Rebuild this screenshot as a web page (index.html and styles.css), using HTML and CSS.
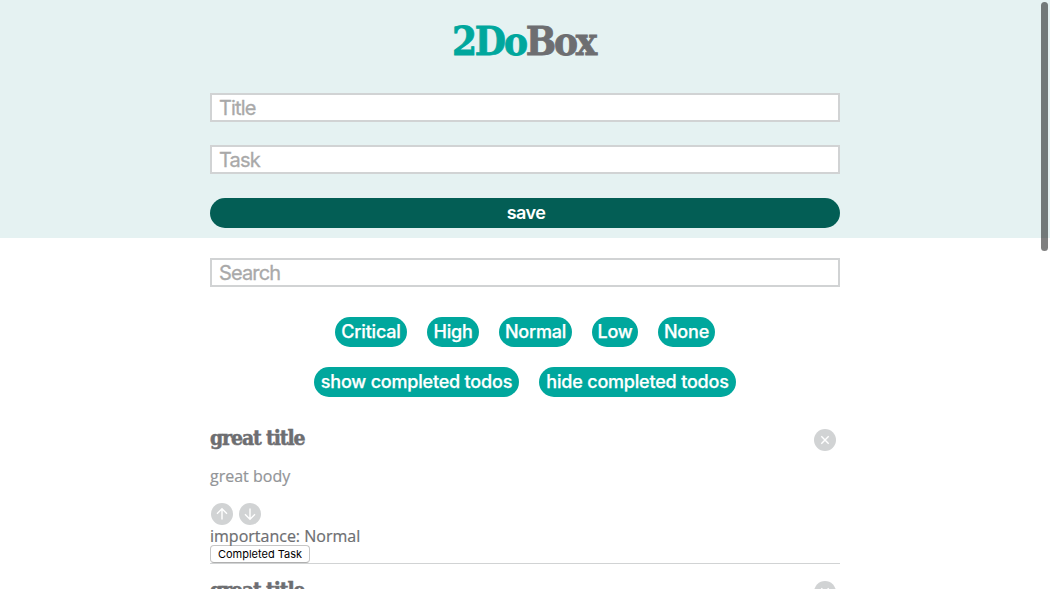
FILE: index.html
```html
<!DOCTYPE html>
<html lang="en">
<head>
<meta charset="utf-8">
<title>2DoBox</title>
<link rel="stylesheet" href="styles.css">
</head>
<body>
<header class="top">
  <h1 class="logo"><span class="logo-accent">2Do</span>Box</h1>
  <form class="entry">
    <input class="field" type="text" placeholder="Title">
    <input class="field" type="text" placeholder="Task">
    <button class="save" type="button">save</button>
  </form>
</header>
<main class="content">
  <input class="field" type="text" placeholder="Search">
  <div class="filters">
    <button class="pill critical">Critical</button>
    <button class="pill high">High</button>
    <button class="pill normal">Normal</button>
    <button class="pill low">Low</button>
    <button class="pill none">None</button>
  </div>
  <div class="filters second">
    <button class="pill show">show completed todos</button>
    <button class="pill hide">hide completed todos</button>
  </div>
  <article class="todo">
    <div class="todo-head">
      <h2 class="todo-title">great title</h2>
      <svg class="icon" viewBox="0 0 22 22"><circle cx="11" cy="11" r="11"/><path d="M7.3 7.3l7.4 7.4M14.7 7.3l-7.4 7.4"/></svg>
    </div>
    <p class="todo-body">great body</p>
    <div class="votes">
      <svg class="icon" viewBox="0 0 22 22"><circle cx="11" cy="11" r="11"/><path d="M11 16.5V5.8M6 10.8l5-5 5 5"/></svg>
      <svg class="icon" viewBox="0 0 22 22"><circle cx="11" cy="11" r="11"/><path d="M11 5.5v10.7M6 11.2l5 5 5-5"/></svg>
    </div>
    <p class="importance">importance: Normal</p>
    <button class="complete">Completed Task</button>
  </article>
  <article class="todo">
    <div class="todo-head">
      <h2 class="todo-title">great title</h2>
      <svg class="icon" viewBox="0 0 22 22"><circle cx="11" cy="11" r="11"/><path d="M7.3 7.3l7.4 7.4M14.7 7.3l-7.4 7.4"/></svg>
    </div>
  </article>
</main>
<div class="scroll-thumb"></div>
</body>
</html>
```
FILE: styles.css
```css
* { box-sizing: border-box; margin: 0; }
html, body { height: 589px; overflow: hidden; }
body { background: #fff; color: #6d6e71; font-family: "Open Sans", sans-serif; font-size: 16px; }
button { border: 0; padding: 0; white-space: nowrap; }
.top { height: 238px; padding-top: 14px; background: #e5f2f2; }
.logo { height: 54px; padding-right: 3px; line-height: 53px; text-align: center; font-family: "Roboto Slab", "DejaVu Serif Condensed", "DejaVu Serif", serif; font-size: 40px; font-weight: 700; letter-spacing: -2.2px; -webkit-text-stroke: 0.8px; }
.logo-accent { color: #00a79d; }
.entry { display: flex; flex-direction: column; gap: 23px; width: 630px; margin: 25px auto 0; }
.field { display: block; width: 630px; height: 29px; padding: 0 7px; border: 2px solid #d1d3d4; border-radius: 0; background: #fff; font-family: Inter, sans-serif; font-size: 20px; letter-spacing: -0.85px; outline: 0; }
.field::placeholder { color: #a9a9a9; opacity: 1; -webkit-text-stroke: 0.3px; }
.save { height: 30px; margin-top: 1px; padding-left: 2px; border-radius: 15px; background: #035e55; color: #fff; font: 600 18px/30px Inter, sans-serif; letter-spacing: -0.6px; }
.content { width: 630px; margin: 20px auto 0; }
.filters { display: flex; justify-content: center; gap: 20px; margin-top: 30px; }
.second { margin-top: 20px; }
.pill { height: 30px; border-radius: 15px; background: #00a79d; color: #fff; font: 500 18px/30px Inter, sans-serif; letter-spacing: -0.2px; -webkit-text-stroke: 0.25px; }
.critical { width: 72px; }
.high { width: 52px; }
.normal { width: 73px; }
.low { width: 46px; }
.none { width: 57px; }
.show { width: 205px; }
.hide { width: 197px; }
.todo { height: 151px; border-bottom: 1px solid #d1d3d4; }
.filters + .todo { height: 152px; margin-top: 15px; }
.todo-head { display: flex; justify-content: space-between; height: 50px; padding: 16.5px 4.5px 0 0; }
.todo-title { height: 22px; line-height: 18px; font-family: "Roboto Slab", "DejaVu Serif Condensed", "DejaVu Serif", serif; font-size: 21px; font-weight: 700; letter-spacing: -1.1px; -webkit-text-stroke: 0.5px; }
.icon { display: block; width: 22px; height: 22px; fill: #d1d3d4; }
.icon path { fill: none; stroke: #fff; stroke-width: 1.4; }
.todo-body { height: 22px; line-height: 22px; margin-top: 3px; color: #939598; -webkit-text-stroke: 0.2px; }
.votes { display: flex; gap: 6px; padding: 15.5px 0 0 1.3px; }
.importance { height: 20px; line-height: 22px; margin-top: 0.5px; -webkit-text-stroke: 0.2px; }
.complete { display: block; width: 100px; height: 18px; border: 1px solid #c6c6c6; border-bottom-color: #b0b0b0; border-radius: 4px; background: #fff; color: #000; font: 400 11px/15px Inter, sans-serif; }
.scroll-thumb { position: absolute; top: 2px; left: 1041px; width: 7px; height: 249px; border-radius: 4px; background: rgba(0, 0, 0, 0.5); }
```
